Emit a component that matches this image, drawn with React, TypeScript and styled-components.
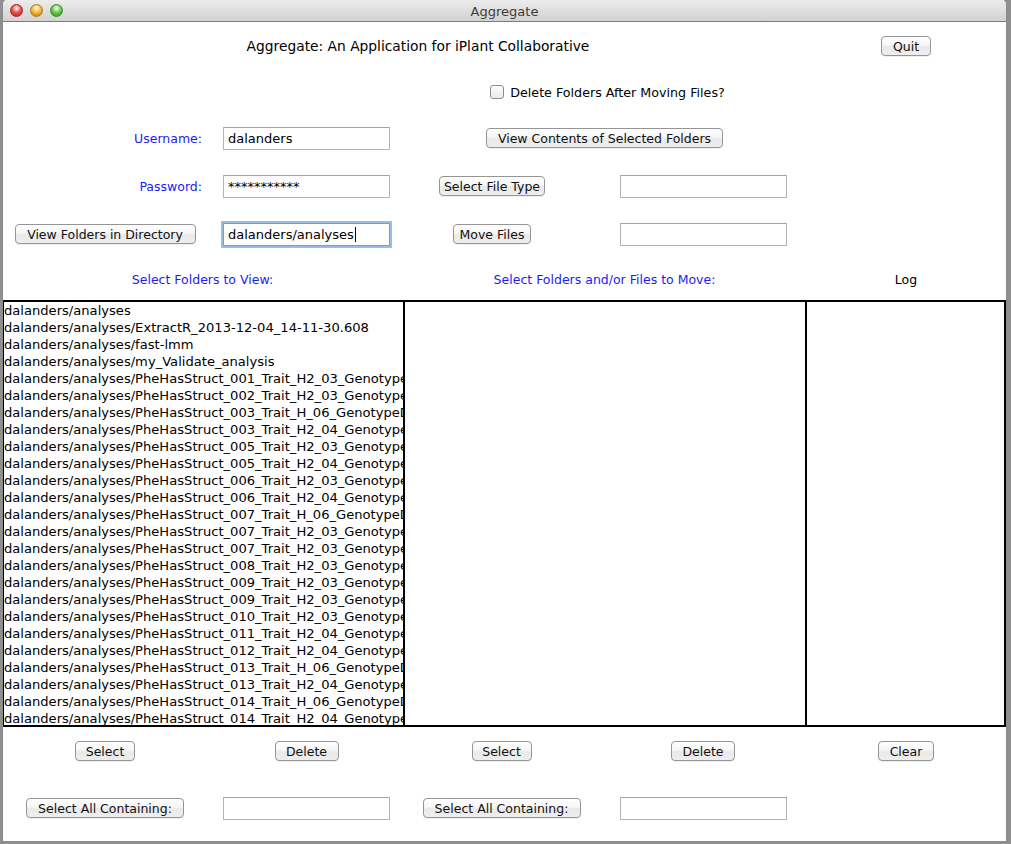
import React from 'react';
import styled, { createGlobalStyle } from 'styled-components';

const Global = createGlobalStyle`
  html, body { margin: 0; padding: 0; background: #8f8f8f; }
  body { font-family: "DejaVu Sans", "Liberation Sans", sans-serif; font-size: 12.5px; color: #000; }
  * { box-sizing: border-box; }
`;

const Desktop = styled.div`
  width: 1011px;
  height: 844px;
  overflow: hidden;
  padding-left: 2px;
`;

const Window = styled.div`
  width: 1005px;
  height: 842px;
  background: #fff;
  border: 1px solid #8a8a8a;
  border-top: none;
  border-radius: 5px 5px 0 0;
  overflow: hidden;
  display: flex;
  flex-direction: column;
`;

const TitleBar = styled.div`
  height: 22px;
  flex: none;
  border-bottom: 1px solid #7b7b7b;
  background: linear-gradient(#ececec, #d2d2d2);
  display: grid;
  grid-template-columns: 1fr auto 1fr;
  align-items: center;
`;

const Lights = styled.div`
  display: flex;
  gap: 7px;
  padding-left: 7px;
`;

const Light = styled.div<{ $c: string; $d: string }>`
  width: 13px;
  height: 13px;
  border-radius: 50%;
  border: 1px solid ${p => p.$d};
  background: radial-gradient(circle at 50% 30%, #ffffff 0%, ${p => p.$c} 45%, ${p => p.$d} 100%);
`;

const WindowTitle = styled.div`
  font-size: 13px;
  color: #3d3d3d;
  padding-top: 1px;
`;

const Form = styled.div`
  display: grid;
  grid-template-columns: 204px 199px 191px 212px 197px;
  grid-template-rows: 48px 44px 48px 48px 48px 42px 427px 48px 66px;
  align-items: center;
`;

const Cell = styled.div<{ $col: number; $span?: number; $justify?: string; $ml?: number; $mr?: number }>`
  grid-column: ${p => p.$col} / span ${p => p.$span ?? 1};
  justify-self: ${p => p.$justify ?? 'center'};
  margin-left: ${p => p.$ml ?? 0}px;
  margin-right: ${p => p.$mr ?? 0}px;
  display: flex;
  align-items: center;
`;

const Heading = styled.div<{ $big?: boolean }>`
  font-size: ${p => (p.$big ? '13.8px' : '12.5px')};
  color: #000;
`;

const BlueLabel = styled.div`
  color: #1c1cf5;
  font-size: 12.5px;
`;

const Button = styled.button<{ $w: number }>`
  width: ${p => p.$w}px;
  height: 20px;
  padding: 0;
  border: 1px solid #959595;
  border-radius: 4px;
  background: linear-gradient(#ffffff 0%, #f6f6f6 45%, #e9e9e9 55%, #eeeeee 100%);
  box-shadow: 0 1px 0 rgba(0, 0, 0, 0.06);
  font-family: "DejaVu Sans", "Liberation Sans", sans-serif;
  font-size: 12.5px;
  color: #111;
  display: flex;
  align-items: center;
  justify-content: center;
  white-space: nowrap;
`;

const Field = styled.div<{ $focus?: boolean }>`
  width: 167px;
  height: 23px;
  border: 1px solid ${p => (p.$focus ? '#6f9fd8' : '#b4b4b4')};
  border-top-color: ${p => (p.$focus ? '#6f9fd8' : '#a4a4a4')};
  background: #fff;
  padding-left: 4px;
  display: flex;
  align-items: center;
  font-size: 13px;
  white-space: nowrap;
  overflow: hidden;
  box-shadow: ${p => (p.$focus ? '0 0 0 2px rgba(120, 165, 225, 0.75)' : 'none')};
`;

const Caret = styled.span`
  display: inline-block;
  width: 1px;
  height: 15px;
  background: #000;
  margin-left: 1px;
`;

const CheckRow = styled.label`
  display: flex;
  align-items: center;
  gap: 6px;
  font-size: 12.7px;
`;

const CheckBox = styled.span`
  width: 14px;
  height: 14px;
  border: 1px solid #8d8d8d;
  border-radius: 3px;
  background: linear-gradient(#ffffff, #e8e8e8);
`;

const Lists = styled.div`
  grid-column: 1 / -1;
  align-self: stretch;
  display: grid;
  grid-template-columns: 402px 402px 199px;
`;

const Pane = styled.div<{ $first?: boolean }>`
  border-top: 2px solid #000;
  border-bottom: 2px solid #000;
  border-right: 2px solid #000;
  border-left: ${p => (p.$first ? '1px solid #000' : 'none')};
  overflow: hidden;
  background: #fff;
`;

const Item = styled.div`
  height: 17px;
  line-height: 17px;
  padding-left: 0;
  white-space: nowrap;
  font-size: 13.1px;
`;

const base = 'dalanders/analyses';
const items = [
  base,
  `${base}/ExtractR_2013-12-04_14-11-30.608`,
  `${base}/fast-lmm`,
  `${base}/my_Validate_analysis`,
  ...[
    '001_Trait_H2_03',
    '002_Trait_H2_03',
    '003_Trait_H_06',
    '003_Trait_H2_04',
    '005_Trait_H2_03',
    '005_Trait_H2_04',
    '006_Trait_H2_03',
    '006_Trait_H2_04',
    '007_Trait_H_06',
    '007_Trait_H2_03',
    '007_Trait_H2_03',
    '008_Trait_H2_03',
    '009_Trait_H2_03',
    '009_Trait_H2_03',
    '010_Trait_H2_03',
    '011_Trait_H2_04',
    '012_Trait_H2_04',
    '013_Trait_H_06',
    '013_Trait_H2_04',
    '014_Trait_H_06',
    '014_Trait_H2_04',
  ].map(s => `${base}/PheHasStruct_${s}_GenotypeData`),
];

export default function App() {
  return (
    <>
      <Global />
      <Desktop>
        <Window>
          <TitleBar>
            <Lights>
              <Light $c="#f0524c" $d="#a8221c" />
              <Light $c="#f4b63a" $d="#b07a10" />
              <Light $c="#6cc84c" $d="#3a8a24" />
            </Lights>
            <WindowTitle>Aggregate</WindowTitle>
            <div />
          </TitleBar>
          <Form>
            <Cell $col={1} $span={4} $ml={24}>
              <Heading $big>Aggregate: An Application for iPlant Collaborative</Heading>
            </Cell>
            <Cell $col={5} $mr={3}>
              <Button $w={50}>Quit</Button>
            </Cell>

            <Cell $col={3} $span={2}>
              <CheckRow>
                <CheckBox />
                Delete Folders After Moving Files?
              </CheckRow>
            </Cell>

            <Cell $col={1} $justify="end" $mr={5}>
              <BlueLabel>Username:</BlueLabel>
            </Cell>
            <Cell $col={2}>
              <Field>dalanders</Field>
            </Cell>
            <Cell $col={3} $span={2} $mr={6}>
              <Button $w={237}>View Contents of Selected Folders</Button>
            </Cell>

            <Cell $col={1} $justify="end" $mr={5}>
              <BlueLabel>Password:</BlueLabel>
            </Cell>
            <Cell $col={2}>
              <Field>***********</Field>
            </Cell>
            <Cell $col={3} $mr={19}>
              <Button $w={106}>Select File Type</Button>
            </Cell>
            <Cell $col={4}>
              <Field />
            </Cell>

            <Cell $col={1}>
              <Button $w={181}>View Folders in Directory</Button>
            </Cell>
            <Cell $col={2}>
              <Field $focus>
                dalanders/analyses
                <Caret />
              </Field>
            </Cell>
            <Cell $col={3} $mr={19}>
              <Button $w={78}>Move Files</Button>
            </Cell>
            <Cell $col={4}>
              <Field />
            </Cell>

            <Cell $col={1} $span={2} $mr={4}>
              <BlueLabel>Select Folders to View:</BlueLabel>
            </Cell>
            <Cell $col={3} $span={2} $mr={6}>
              <BlueLabel>Select Folders and/or Files to Move:</BlueLabel>
            </Cell>
            <Cell $col={5} $mr={3}>
              <Heading>Log</Heading>
            </Cell>

            <Lists>
              <Pane $first>
                {items.map((t, i) => (
                  <Item key={i}>{t}</Item>
                ))}
              </Pane>
              <Pane />
              <Pane />
            </Lists>

            <Cell $col={1}>
              <Button $w={60}>Select</Button>
            </Cell>
            <Cell $col={2}>
              <Button $w={64}>Delete</Button>
            </Cell>
            <Cell $col={3}>
              <Button $w={60}>Select</Button>
            </Cell>
            <Cell $col={4}>
              <Button $w={64}>Delete</Button>
            </Cell>
            <Cell $col={5} $mr={3}>
              <Button $w={56}>Clear</Button>
            </Cell>

            <Cell $col={1}>
              <Button $w={158}>Select All Containing:</Button>
            </Cell>
            <Cell $col={2}>
              <Field />
            </Cell>
            <Cell $col={3}>
              <Button $w={158}>Select All Containing:</Button>
            </Cell>
            <Cell $col={4}>
              <Field />
            </Cell>
          </Form>
        </Window>
      </Desktop>
    </>
  );
}
